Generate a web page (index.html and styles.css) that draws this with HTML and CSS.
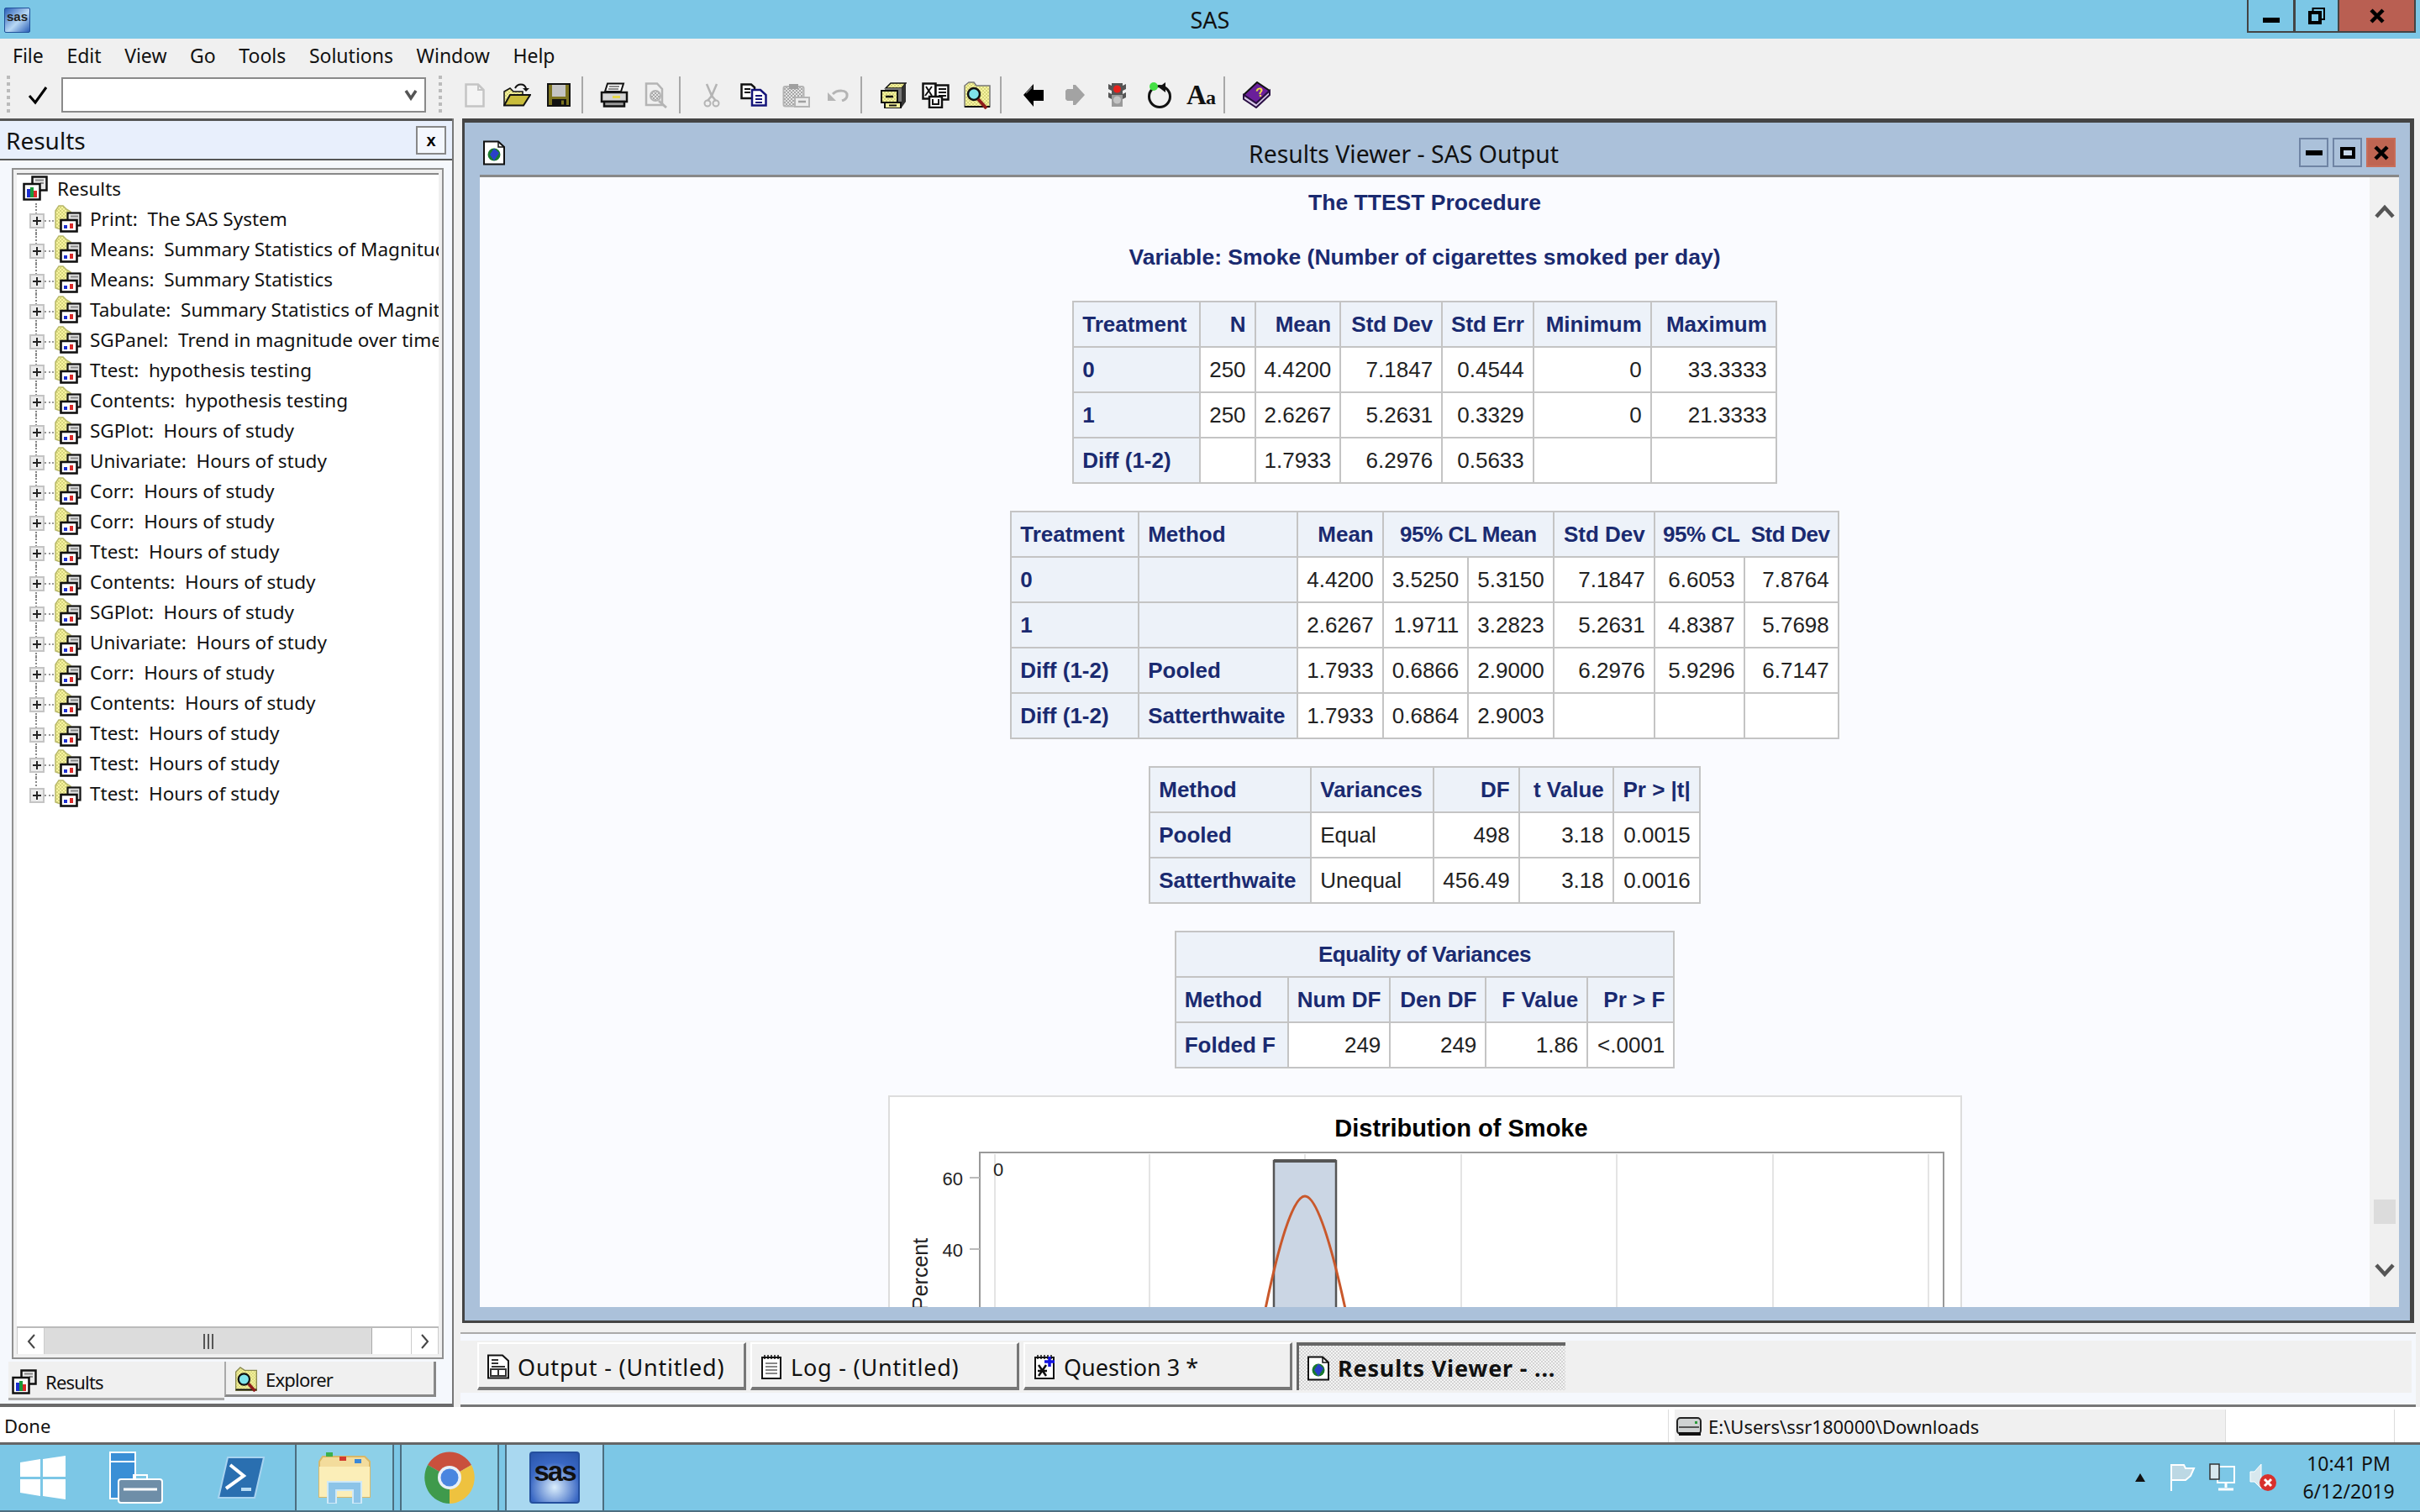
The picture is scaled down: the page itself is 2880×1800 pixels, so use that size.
FILE: index.html
```html
<!DOCTYPE html>
<html lang="en">
    <head>
        <meta charset="UTF-8" />
        <title>SAS</title>
        <link rel="stylesheet" href="styles.css">
    </head>
    <body>
        <svg class="sprite" xmlns="http://www.w3.org/2000/svg">
            <defs>
                <pattern id="dither" width="4" height="4" patternUnits="userSpaceOnUse">
                    <rect width="4" height="4" fill="#f8f4a0"/>
                    <rect width="2" height="2" fill="#d6d67c"/>
                    <rect x="2" y="2" width="2" height="2" fill="#d6d67c"/>
                </pattern>
                <pattern id="dither-gray" width="4" height="4" patternUnits="userSpaceOnUse">
                    <rect width="4" height="4" fill="#e4e4e4"/>
                    <rect width="2" height="2" fill="#a6a6a6"/>
                    <rect x="2" y="2" width="2" height="2" fill="#a6a6a6"/>
                </pattern>
                <symbol id="ic-results" viewBox="0 0 30 30">
                    <rect x="11.5" y="1.5" width="17" height="16" fill="#e8e8e8" stroke="#111" stroke-width="2.5"/>
                    <path d="M15 5.5h10M21 9h4" stroke="#888" stroke-width="2"/>
                    <rect x="1.5" y="10" width="19" height="18.5" fill="#fff" stroke="#111" stroke-width="2.5"/>
                    <rect x="5" y="16" width="4" height="10" fill="#1c2fd0"/>
                    <rect x="9" y="14" width="4" height="12" fill="#1a9a3a"/>
                    <rect x="13" y="18" width="4" height="8" fill="#d92a2a"/>
                </symbol>
                <symbol id="ic-folder-results" viewBox="0 0 32 33">
                    <path d="M1 7 L5 1 H10 L14 5 L19 8 V29 H7 L1 27 Z" fill="url(#dither)" stroke="#b8b86a" stroke-width="1.5"/>
                    <rect x="15.5" y="9.5" width="15" height="15" fill="#e4e4e4" stroke="#111" stroke-width="2.2"/>
                    <path d="M19 13.5h9" stroke="#888" stroke-width="2"/>
                    <rect x="7.5" y="18" width="19" height="13.5" fill="#fff" stroke="#111" stroke-width="2.6"/>
                    <rect x="11" y="24" width="4" height="4" fill="#1c2fd0"/>
                    <rect x="18" y="22" width="4" height="6" fill="#d92a2a"/>
                </symbol>
                <symbol id="ic-globe-doc" viewBox="0 0 30 30">
                    <path d="M3 1.5 H20 L27 8 V28.5 H3 Z" fill="#fff" stroke="#111" stroke-width="2"/>
                    <path d="M20 1.5 V8 H27" fill="none" stroke="#111" stroke-width="1.5"/>
                    <circle cx="15" cy="17" r="7.5" fill="#1a7a2e"/>
                    <path d="M15 9.5 L21 15 L15 24.5 L10 17 Z" fill="#2a3fc8"/>
                </symbol>
                <symbol id="ic-output-doc" viewBox="0 0 30 30">
                    <path d="M3 1.5 H20 L27 8 V28.5 H3 Z" fill="#fff" stroke="#111" stroke-width="2"/>
                    <path d="M7 7h8M7 11h8M7 15h16" stroke="#333" stroke-width="2"/>
                    <rect x="6" y="18" width="18" height="8" fill="#fff" stroke="#333" stroke-width="2"/>
                    <path d="M15 18v8" stroke="#333" stroke-width="2"/>
                </symbol>
                <symbol id="ic-log-doc" viewBox="0 0 30 30">
                    <rect x="4" y="4" width="22" height="25" fill="#fff" stroke="#111" stroke-width="2"/>
                    <path d="M7 1v5M11 1v5M15 1v5M19 1v5M23 1v5" stroke="#111" stroke-width="1.5"/>
                    <path d="M8 11h14M8 15h14M8 19h14M8 23h14" stroke="#888" stroke-width="2"/>
                </symbol>
                <symbol id="ic-program-doc" viewBox="0 0 30 30">
                    <rect x="4" y="4" width="22" height="25" fill="#fff" stroke="#111" stroke-width="2"/>
                    <path d="M7 1v5M11 1v5M15 1v5M19 1v5M23 1v5" stroke="#111" stroke-width="1.5"/>
                    <path d="M8 26 L17 13 M8 13 L17 26 M7 20h11" stroke="#111" stroke-width="2.5"/>
                    <path d="M21 3v12M15 9h12" stroke="#1414e0" stroke-width="3.5"/>
                </symbol>
                <symbol id="ic-explorer" viewBox="0 0 32 34">
                    <path d="M2 7 L8 1 L14 5 H30 V32 H2 Z" fill="url(#dither)" stroke="#8a8a50" stroke-width="1.5"/>
                    <path d="M2 32 H30 V30 H2 Z" fill="#111"/>
                    <circle cx="13" cy="17" r="7.5" fill="#7fe4ec" stroke="#111" stroke-width="2.5"/>
                    <path d="M19 23 L28 33" stroke="#8e1b1b" stroke-width="4"/>
                </symbol>
            </defs>
        </svg>

        <div class="screen">
            <header class="titlebar">
                <div class="app-icon">sas</div>
                <div class="app-title">SAS</div>
                <div class="win-buttons">
                    <button class="win-btn win-min"><span class="glyph-min"></span></button>
                    <button class="win-btn win-restore">
                        <svg width="20" height="20" viewBox="0 0 20 20"><path d="M5.5 4.5 V1 H19 V14 H16" fill="none" stroke="#000" stroke-width="2"/><rect x="2" y="6" width="12" height="12" fill="none" stroke="#000" stroke-width="4"/></svg>
                    </button>
                    <button class="win-btn win-close">
                        <svg width="20" height="18" viewBox="0 0 20 18"><path d="M3 2 L17 16 M17 2 L3 16" stroke="#000" stroke-width="4.5"/></svg>
                    </button>
                </div>
            </header>

            <nav class="menubar">
                <span>File</span><span>Edit</span><span>View</span><span>Go</span><span>Tools</span><span>Solutions</span><span>Window</span><span>Help</span>
            </nav>

            <div class="toolbar">
                <span class="grip"></span>
                <span class="check-btn">
                    <svg width="28" height="28" viewBox="0 0 28 28"><path d="M4 15 L11 23 L24 5" fill="none" stroke="#000" stroke-width="3"/></svg>
                </span>
                <div class="combo">
                    <svg width="16" height="14" viewBox="0 0 16 14"><path d="M2 2 L8 11 L14 2" fill="none" stroke="#555" stroke-width="3.5"/></svg>
                </div>
                <span class="grip grip-second"></span>

                <span class="tool">
                    <svg width="24" height="29" viewBox="0 0 24 29"><path d="M1.5 1.5 H16 L22.5 8 V27.5 H1.5 Z" fill="#f4f4f4" stroke="#c4c4c4" stroke-width="2.5"/><path d="M16 1.5 V8 H22.5" fill="none" stroke="#c4c4c4" stroke-width="2"/></svg>
                </span>
                <span class="tool">
                    <svg width="33" height="28" viewBox="0 0 33 28"><path d="M1 10 L8 6 L12 10 H23 V26 H1 Z" fill="url(#dither)" stroke="#111" stroke-width="1.5"/><path d="M1 26.5 L8 14 H32 L24 26.5 Z" fill="#c9bd3c" stroke="#111" stroke-width="2"/><path d="M14 6 C17 0 25 0 27 6" fill="none" stroke="#111" stroke-width="2"/><path d="M23 6 H31 L27 10 Z" fill="#111"/></svg>
                </span>
                <span class="tool">
                    <svg width="28" height="28" viewBox="0 0 28 28"><rect x="1" y="1" width="26" height="26" fill="#7d7420" stroke="#111" stroke-width="2"/><rect x="6" y="2" width="16" height="14" fill="#c4c4c4"/><rect x="6" y="19" width="17" height="8" fill="#111"/><rect x="17" y="20.5" width="3" height="5" fill="#7d7420"/></svg>
                </span>
                <span class="tool-sep"></span>
                <span class="tool">
                    <svg width="34" height="30" viewBox="0 0 34 30"><path d="M9 1.5 H28 L25 11 H6 Z" fill="#fff" stroke="#111" stroke-width="2"/><path d="M11 5h12M10 8h12" stroke="#666" stroke-width="1.5"/><path d="M2 12 H32 V23 H2 Z" fill="#d4d4d4" stroke="#111" stroke-width="2.5"/><rect x="15" y="16" width="9" height="3" fill="#e6d84a"/><path d="M5 23 H29 V28.5 H5 Z" fill="#999" stroke="#111" stroke-width="2.5"/></svg>
                </span>
                <span class="tool">
                    <svg width="28" height="31" viewBox="0 0 28 31"><path d="M2 1.5 H15 L21 8 V27 H2 Z" fill="#f0f0f0" stroke="#b4b4b4" stroke-width="2.5"/><circle cx="13" cy="16" r="6" fill="url(#dither-gray)" stroke="#b4b4b4" stroke-width="2"/><path d="M17 22 L26 30" stroke="#b4b4b4" stroke-width="3"/></svg>
                </span>
                <span class="tool-sep"></span>
                <span class="tool">
                    <svg width="20" height="29" viewBox="0 0 20 29"><path d="M4 1 L10 15 L16 1" fill="none" stroke="#b4b4b4" stroke-width="2.5"/><path d="M10 15 L5 21 M10 15 L15 21" stroke="#b4b4b4" stroke-width="2.5"/><circle cx="5" cy="24" r="3.5" fill="none" stroke="#b4b4b4" stroke-width="2"/><circle cx="15" cy="24" r="3.5" fill="none" stroke="#b4b4b4" stroke-width="2"/></svg>
                </span>
                <span class="tool">
                    <svg width="32" height="28" viewBox="0 0 32 28"><path d="M1.5 1.5 H13 L17 5 V18 H1.5 Z" fill="#fff" stroke="#111" stroke-width="2.5"/><path d="M5 7h7M5 11h7" stroke="#111" stroke-width="2"/><path d="M14 8 H24 L30.5 14 V26.5 H14 Z" fill="#fff" stroke="#14147a" stroke-width="2.5"/><path d="M18 15h8M18 19h8M18 23h8" stroke="#14147a" stroke-width="2"/></svg>
                </span>
                <span class="tool">
                    <svg width="33" height="29" viewBox="0 0 33 29"><rect x="1.5" y="4" width="24" height="23.5" rx="2" fill="url(#dither-gray)" stroke="#b4b4b4" stroke-width="2"/><rect x="8" y="1" width="11" height="6" fill="#a0a0a0"/><rect x="15" y="17" width="17" height="11" fill="#ececec" stroke="#b4b4b4" stroke-width="2"/><path d="M19 22h9" stroke="#a0a0a0" stroke-width="2.5"/></svg>
                </span>
                <span class="tool">
                    <svg width="26" height="15" viewBox="0 0 26 15"><path d="M7 6 C12 1 25 0 24 8 C24 11 21 13 18 14" fill="none" stroke="#b4b4b4" stroke-width="3"/><path d="M1 4 V14 H11 Z" fill="#b4b4b4"/></svg>
                </span>
                <span class="tool-sep"></span>
                <span class="tool">
                    <svg width="31" height="32" viewBox="0 0 31 32"><path d="M6 8 L12 2 H30 L25 8 Z" fill="url(#dither)" stroke="#111" stroke-width="1.5"/><path d="M25 8 L30 2 V24 L25 31 Z" fill="#333"/><path d="M5 8 H25 V31 H5 Z" fill="#777"/><rect x="1" y="11" width="19" height="14" fill="url(#dither)" stroke="#111" stroke-width="2"/><path d="M6 18 h9" stroke="#111" stroke-width="2.5"/><rect x="5" y="25" width="19" height="7" fill="#f8f4a0" stroke="#111" stroke-width="2"/><path d="M10 28.5h9" stroke="#111" stroke-width="2"/></svg>
                </span>
                <span class="tool">
                    <svg width="33" height="31" viewBox="0 0 33 31"><rect x="1.5" y="1.5" width="15" height="18" fill="#fff" stroke="#111" stroke-width="2.5"/><rect x="16.5" y="3.5" width="15" height="17" fill="#fff" stroke="#111" stroke-width="2.5"/><path d="M4 16 L12 5 M5 5 L12 16 M20 8h9M20 12h9M20 16h9" stroke="#111" stroke-width="2"/><rect x="9" y="17" width="15" height="13" fill="#fff" stroke="#111" stroke-width="2.5"/><path d="M13 20v6h7v-6" fill="none" stroke="#111" stroke-width="2"/></svg>
                </span>
                <span class="tool">
                    <svg width="32" height="33" viewBox="0 0 32 33"><path d="M1 5 L6 1 H12 L15 5 H31 V30 H1 Z" fill="url(#dither)" stroke="#777" stroke-width="1.5"/><path d="M1 29 H31 V31 H1 Z" fill="#111"/><circle cx="12" cy="15" r="7" fill="#7fe4ec" stroke="#111" stroke-width="2.5"/><path d="M17 21 L27 32" stroke="#8e1b1b" stroke-width="4"/></svg>
                </span>
                <span class="tool-sep"></span>
                <span class="tool">
                    <svg width="25" height="28" viewBox="0 0 25 28"><path d="M1 14 L13 1 V8 H25 V21 H13 V28 Z" fill="#000"/><path d="M4 12 L11 5" stroke="#777" stroke-width="1.5"/></svg>
                </span>
                <span class="tool">
                    <svg width="23" height="26" viewBox="0 0 23 26"><path d="M23 13 L12 1 H9 V6 H2 L0 8 V18 L2 20 H9 V25 H12 Z" fill="#a3a3a3"/></svg>
                </span>
                <span class="tool">
                    <svg width="21" height="30" viewBox="0 0 21 30"><path d="M0 2 L4 4 V1 H17 V4 L21 2 V8 L17 10 V14 L21 12 V18 L17 20 V29 H4 V20 L0 18 V12 L4 14 V10 L0 8 Z" fill="#555"/><path d="M4 15 H17 V29 H4 Z" fill="#9a9a9a"/><circle cx="10.5" cy="8" r="4.5" fill="#e8221c"/><circle cx="10.5" cy="21" r="4.5" fill="#c4c4c4"/></svg>
                </span>
                <span class="tool">
                    <svg width="31" height="31" viewBox="0 0 31 31"><circle cx="16" cy="17" r="12.5" fill="none" stroke="#111" stroke-width="3"/><path d="M23 0 V12 L15 6 Z" fill="#111"/><circle cx="9" cy="5" r="5" fill="#45e045"/></svg>
                </span>
                <span class="tool tool-font">A<small>a</small></span>
                <span class="tool-sep"></span>
                <span class="tool">
                    <svg width="33" height="32" viewBox="0 0 33 32"><path d="M1 16 L17 1 L32 11 L16 26 Z" fill="#6a1f9a" stroke="#111" stroke-width="2"/><path d="M1 16 V21 L16 31 L32 16 V11 L16 26 Z" fill="#d8c8e8" stroke="#2a0f44" stroke-width="2"/><text x="16" y="19" class="book-mark" transform="rotate(-14 16 15)">?</text></svg>
                </span>
            </div>

            <main class="workspace">
                <aside class="side-panel">
                    <div class="side-head">
                        <span class="side-title">Results</span>
                        <button class="side-close">x</button>
                    </div>
                    <div class="tree-frame">
                        <div class="tree">
                            <div class="tree-root">
                                <svg class="tree-root-icon"><use href="#ic-results"/></svg>
                                <span>Results</span>
                            </div>
                            <ul class="tree-list">
                                <li><i class="plus"></i><svg class="node-icon"><use href="#ic-folder-results"/></svg><span>Print:  The SAS System</span></li>
                                <li><i class="plus"></i><svg class="node-icon"><use href="#ic-folder-results"/></svg><span>Means:  Summary Statistics of Magnitude</span></li>
                                <li><i class="plus"></i><svg class="node-icon"><use href="#ic-folder-results"/></svg><span>Means:  Summary Statistics</span></li>
                                <li><i class="plus"></i><svg class="node-icon"><use href="#ic-folder-results"/></svg><span>Tabulate:  Summary Statistics of Magnitude</span></li>
                                <li><i class="plus"></i><svg class="node-icon"><use href="#ic-folder-results"/></svg><span>SGPanel:  Trend in magnitude over time</span></li>
                                <li><i class="plus"></i><svg class="node-icon"><use href="#ic-folder-results"/></svg><span>Ttest:  hypothesis testing</span></li>
                                <li><i class="plus"></i><svg class="node-icon"><use href="#ic-folder-results"/></svg><span>Contents:  hypothesis testing</span></li>
                                <li><i class="plus"></i><svg class="node-icon"><use href="#ic-folder-results"/></svg><span>SGPlot:  Hours of study</span></li>
                                <li><i class="plus"></i><svg class="node-icon"><use href="#ic-folder-results"/></svg><span>Univariate:  Hours of study</span></li>
                                <li><i class="plus"></i><svg class="node-icon"><use href="#ic-folder-results"/></svg><span>Corr:  Hours of study</span></li>
                                <li><i class="plus"></i><svg class="node-icon"><use href="#ic-folder-results"/></svg><span>Corr:  Hours of study</span></li>
                                <li><i class="plus"></i><svg class="node-icon"><use href="#ic-folder-results"/></svg><span>Ttest:  Hours of study</span></li>
                                <li><i class="plus"></i><svg class="node-icon"><use href="#ic-folder-results"/></svg><span>Contents:  Hours of study</span></li>
                                <li><i class="plus"></i><svg class="node-icon"><use href="#ic-folder-results"/></svg><span>SGPlot:  Hours of study</span></li>
                                <li><i class="plus"></i><svg class="node-icon"><use href="#ic-folder-results"/></svg><span>Univariate:  Hours of study</span></li>
                                <li><i class="plus"></i><svg class="node-icon"><use href="#ic-folder-results"/></svg><span>Corr:  Hours of study</span></li>
                                <li><i class="plus"></i><svg class="node-icon"><use href="#ic-folder-results"/></svg><span>Contents:  Hours of study</span></li>
                                <li><i class="plus"></i><svg class="node-icon"><use href="#ic-folder-results"/></svg><span>Ttest:  Hours of study</span></li>
                                <li><i class="plus"></i><svg class="node-icon"><use href="#ic-folder-results"/></svg><span>Ttest:  Hours of study</span></li>
                                <li><i class="plus"></i><svg class="node-icon"><use href="#ic-folder-results"/></svg><span>Ttest:  Hours of study</span></li>
                            </ul>
                            <div class="hscroll">
                                <span class="hscroll-btn">
                                    <svg width="12" height="20" viewBox="0 0 12 20"><path d="M10 2 L3 10 L10 18" fill="none" stroke="#444" stroke-width="2"/></svg>
                                </span>
                                <span class="hscroll-thumb"><i></i><i></i><i></i></span>
                                <span class="hscroll-rest"></span>
                                <span class="hscroll-btn">
                                    <svg width="12" height="20" viewBox="0 0 12 20"><path d="M2 2 L9 10 L2 18" fill="none" stroke="#444" stroke-width="2"/></svg>
                                </span>
                            </div>
                        </div>
                    </div>
                    <div class="side-tabs">
                        <div class="side-tab side-tab-active">
                            <svg class="tab-icon"><use href="#ic-results"/></svg>
                            <span>Results</span>
                        </div>
                        <div class="side-tab">
                            <svg class="tab-icon"><use href="#ic-explorer"/></svg>
                            <span>Explorer</span>
                        </div>
                    </div>
                </aside>

                <section class="mdi">
                    <div class="viewer">
                        <div class="viewer-head">
                            <svg class="viewer-icon"><use href="#ic-globe-doc"/></svg>
                            <span class="viewer-title">Results Viewer - SAS Output</span>
                            <div class="viewer-buttons">
                                <button class="mini-btn"><span class="glyph-min"></span></button>
                                <button class="mini-btn"><span class="glyph-max"></span></button>
                                <button class="mini-btn mini-close">
                                    <svg width="20" height="18" viewBox="0 0 20 18"><path d="M3 2 L17 16 M17 2 L3 16" stroke="#000" stroke-width="4.5"/></svg>
                                </button>
                            </div>
                        </div>
                        <div class="viewer-body">
                            <div class="output">
                                <h1 class="proc-title">The TTEST Procedure</h1>
                                <h2 class="proc-var">Variable: Smoke (Number of cigarettes smoked per day)</h2>

                                <table class="stat">
                                    <colgroup><col class="w151"><col class="w63"><col class="w99"><col class="w121"><col class="w105"><col class="w140"><col class="w149"></colgroup>
                                    <tr><th class="left">Treatment</th><th>N</th><th>Mean</th><th>Std Dev</th><th>Std Err</th><th>Minimum</th><th>Maximum</th></tr>
                                    <tr><th class="left">0</th><td>250</td><td>4.4200</td><td>7.1847</td><td>0.4544</td><td>0</td><td>33.3333</td></tr>
                                    <tr><th class="left">1</th><td>250</td><td>2.6267</td><td>5.2631</td><td>0.3329</td><td>0</td><td>21.3333</td></tr>
                                    <tr><th class="left">Diff (1-2)</th><td></td><td>1.7933</td><td>6.2976</td><td>0.5633</td><td></td><td></td></tr>
                                </table>

                                <table class="stat">
                                    <colgroup><col class="w152"><col class="w189"><col class="w99"><col class="w101"><col class="w100"><col class="w120"><col class="w107"><col class="w112"></colgroup>
                                    <tr><th class="left">Treatment</th><th class="left">Method</th><th>Mean</th><th colspan="2" class="mid">95% CL Mean</th><th>Std Dev</th><th colspan="2" class="mid">95% CL  Std Dev</th></tr>
                                    <tr><th class="left">0</th><th></th><td>4.4200</td><td>3.5250</td><td>5.3150</td><td>7.1847</td><td>6.6053</td><td>7.8764</td></tr>
                                    <tr><th class="left">1</th><th></th><td>2.6267</td><td>1.9711</td><td>3.2823</td><td>5.2631</td><td>4.8387</td><td>5.7698</td></tr>
                                    <tr><th class="left">Diff (1-2)</th><th class="left">Pooled</th><td>1.7933</td><td>0.6866</td><td>2.9000</td><td>6.2976</td><td>5.9296</td><td>6.7147</td></tr>
                                    <tr><th class="left">Diff (1-2)</th><th class="left">Satterthwaite</th><td>1.7933</td><td>0.6864</td><td>2.9003</td><td></td><td></td><td></td></tr>
                                </table>

                                <table class="stat">
                                    <colgroup><col class="w192"><col class="w146"><col class="w101"><col class="w112"><col class="w103"></colgroup>
                                    <tr><th class="left">Method</th><th class="left">Variances</th><th>DF</th><th>t Value</th><th>Pr &gt; |t|</th></tr>
                                    <tr><th class="left">Pooled</th><td class="left">Equal</td><td>498</td><td>3.18</td><td>0.0015</td></tr>
                                    <tr><th class="left">Satterthwaite</th><td class="left">Unequal</td><td>456.49</td><td>3.18</td><td>0.0016</td></tr>
                                </table>

                                <table class="stat">
                                    <colgroup><col class="w134"><col class="w121"><col class="w114"><col class="w121"><col class="w103"></colgroup>
                                    <tr><th colspan="5" class="mid">Equality of Variances</th></tr>
                                    <tr><th class="left">Method</th><th>Num DF</th><th>Den DF</th><th>F Value</th><th>Pr &gt; F</th></tr>
                                    <tr><th class="left">Folded F</th><td>249</td><td>249</td><td>1.86</td><td>&lt;.0001</td></tr>
                                </table>

                                <div class="chart">
                                    <svg width="1274" height="400" viewBox="0 0 1274 400">
                                        <text x="680" y="47" class="chart-title" text-anchor="middle">Distribution of Smoke</text>
                                        <g stroke="#e4e4e4" stroke-width="2">
                                            <path d="M125 68V400M309 68V400M494 68V400M680 68V400M865 68V400M1051 68V400M1236 68V400"/>
                                        </g>
                                        <rect x="107" y="66" width="1147" height="340" fill="none" stroke="#999" stroke-width="2"/>
                                        <path d="M95 96h12M95 181h12" stroke="#bbb" stroke-width="2"/>
                                        <text x="87" y="105" class="chart-num" text-anchor="end">60</text>
                                        <text x="87" y="190" class="chart-num" text-anchor="end">40</text>
                                        <text x="123" y="94" class="chart-cell">0</text>
                                        <rect x="457" y="76" width="74" height="330" fill="#cbd6e4" stroke="#555" stroke-width="2.5"/>
                                        <path d="M457 76h74" stroke="#555" stroke-width="4"/>
                                        <path d="M447 252 C466 160 482 118 494 118 C506 118 522 160 542 252" fill="none" stroke="#c9582b" stroke-width="3"/>
                                        <text transform="translate(45 254) rotate(-90)" class="chart-axis">Percent</text>
                                    </svg>
                                </div>
                            </div>
                            <div class="vscroll">
                                <svg class="vscroll-up" width="24" height="18" viewBox="0 0 24 18"><path d="M2 15 L12 4 L22 15" fill="none" stroke="#555" stroke-width="4.5"/></svg>
                                <span class="vscroll-thumb"></span>
                                <svg class="vscroll-down" width="24" height="18" viewBox="0 0 24 18"><path d="M2 3 L12 14 L22 3" fill="none" stroke="#555" stroke-width="4.5"/></svg>
                            </div>
                        </div>
                    </div>
                    <div class="window-bar">
                        <div class="window-band">
                            <div class="win-tab win-tab-wide"><svg class="tab-icon"><use href="#ic-output-doc"/></svg><span>Output - (Untitled)</span></div>
                            <div class="win-tab win-tab-wide"><svg class="tab-icon"><use href="#ic-log-doc"/></svg><span>Log - (Untitled)</span></div>
                            <div class="win-tab"><svg class="tab-icon"><use href="#ic-program-doc"/></svg><span>Question 3 *</span></div>
                            <div class="win-tab win-tab-wide win-tab-active"><svg class="tab-icon"><use href="#ic-globe-doc"/></svg><span>Results Viewer - ...</span></div>
                        </div>
                    </div>
                </section>
            </main>

            <footer class="statusbar">
                <span class="status-msg">Done</span>
                <div class="status-path">
                    <svg width="32" height="26" viewBox="0 0 32 26"><rect x="1" y="3" width="28" height="19" rx="4" fill="#cfd2d2" stroke="#222" stroke-width="2"/><path d="M3 14h24" stroke="#555" stroke-width="2"/><path d="M3 22h26" stroke="#111" stroke-width="4"/><rect x="22" y="7" width="3" height="3" fill="#2a9a3a"/></svg>
                    <span>E:\Users\ssr180000\Downloads</span>
                </div>
                <span class="status-end"></span>
            </footer>

            <div class="taskbar">
                <span class="task-slot task-start">
                    <svg width="56" height="52" viewBox="0 0 56 52"><path d="M1 8 L25 4 V25 H1 Z M28 4 L55 0 V25 H28 Z M1 28 H25 V48 L1 44 Z M28 28 H55 V52 L28 48 Z" fill="#fff"/></svg>
                </span>
                <span class="task-slot task-server">
                    <svg width="66" height="62" viewBox="0 0 66 62"><rect x="2" y="1" width="30" height="55" fill="#3a8fd6" stroke="#fff" stroke-width="2"/><path d="M2 12h30" stroke="#fff" stroke-width="2"/><rect x="12" y="33" width="52" height="28" rx="3" fill="#6e8ea8" stroke="#fff" stroke-width="2"/><path d="M30 33 V28 H46 V33" fill="none" stroke="#fff" stroke-width="2"/><path d="M18 45h40" stroke="#fff" stroke-width="3"/></svg>
                </span>
                <span class="task-slot task-shell">
                    <svg width="58" height="52" viewBox="0 0 58 52"><path d="M13 2 H56 L45 50 H2 Z" fill="#2a6fb0" stroke="#a8d4f0" stroke-width="2"/><path d="M16 11 L32 24 L11 39" fill="none" stroke="#fff" stroke-width="4"/><path d="M29 40h12" stroke="#b8dcf4" stroke-width="4"/></svg>
                </span>
                <span class="task-slot task-btn">
                    <svg width="64" height="62" viewBox="0 0 64 62"><path d="M2 12 L6 6 H56 L62 12 V54 H2 Z" fill="#f3dc9c" stroke="#d8b868" stroke-width="2"/><rect x="10" y="1" width="8" height="5" fill="#3cb04a"/><rect x="26" y="6" width="8" height="5" fill="#d23b2e"/><rect x="44" y="9" width="8" height="5" fill="#3b88d8"/><path d="M2 18 H62 V54 H2 Z" fill="#fbeeb8"/><path d="M12 36 H52 V62 H42 V46 H22 V62 H12 Z" fill="#8cc4e8" stroke="#cfe9f8" stroke-width="2"/></svg>
                </span>
                <span class="task-slot task-btn">
                    <svg width="60" height="62" viewBox="0 0 60 62"><path d="M30 31 L4 16 A30 31 0 0 1 56 16 Z" fill="#c9503d"/><path d="M30 31 L4 16 A30 31 0 0 0 30 62 Z" fill="#3f9a4c"/><path d="M30 31 L56 16 A30 31 0 0 1 30 62 Z" fill="#eec23f"/><circle cx="30" cy="31" r="14" fill="#e8f0f8"/><circle cx="30" cy="31" r="10.5" fill="#4a86e0"/></svg>
                </span>
                <span class="task-slot task-btn task-active">
                    <span class="sas-tile">sas</span>
                </span>
                <div class="tray">
                    <svg class="tray-arrow" width="14" height="12" viewBox="0 0 14 12"><path d="M7 1 L13 11 H1 Z" fill="#111"/></svg>
                    <svg width="32" height="34" viewBox="0 0 32 34"><path d="M3 1 V33" stroke="#fff" stroke-width="2"/><path d="M3 2 H18 L20 6 H30 L26 15 L20 20 H3 Z" fill="#bcd8e4" stroke="#fff" stroke-width="2"/></svg>
                    <svg width="32" height="34" viewBox="0 0 32 34"><rect x="10" y="4" width="20" height="19" fill="#7cc7e6" stroke="#fff" stroke-width="2"/><rect x="1" y="1" width="11" height="18" fill="#d8e8ee" stroke="#333" stroke-width="1.5"/><path d="M20 23v6M11 31h18" stroke="#fff" stroke-width="3"/></svg>
                    <svg width="32" height="38" viewBox="0 0 32 38"><path d="M1 12 H6 L14 3 V32 L6 24 H1 Z" fill="#d8e8ee" stroke="#fff" stroke-width="1"/><circle cx="22" cy="25" r="10" fill="#d8302c"/><path d="M18 21 L26 29 M26 21 L18 29" stroke="#fff" stroke-width="3"/></svg>
                    <div class="clock"><span>10:41 PM</span><span>6/12/2019</span></div>
                </div>
            </div>
        </div>
    </body>
</html>
```

FILE: styles.css
```css
html, body {
    margin: 0;
    padding: 0;
}

body {
    font-family: "Noto Sans", sans-serif;
    color: #111;
    background-color: #f0f0f0;
}

.sprite {
    position: absolute;
    width: 0;
    height: 0;
}

.screen {
    width: 2880px;
    height: 1800px;
    overflow: hidden;
    display: flex;
    flex-direction: column;
}

/* title bar */
.titlebar {
    height: 46px;
    flex: none;
    display: grid;
    grid-template-columns: 1fr auto 1fr;
    align-items: start;
    background-color: #7cc7e6;
}

.app-icon {
    width: 29px;
    height: 28px;
    margin: 9px 0 0 5px;
    background: linear-gradient(135deg, #2a5fb8, #b8d8f4 55%, #2a5fb8);
    border: 1px solid #20509a;
    border-radius: 2px;
    font: bold 15px/20px "Liberation Sans", sans-serif;
    color: #222;
    text-align: center;
}

.app-title {
    font-size: 27px;
    line-height: 48px;
}

.win-buttons {
    justify-self: end;
    display: flex;
    margin-right: 5px;
}

.win-btn {
    height: 39px;
    padding: 0;
    border: 1px solid #444;
    border-top: none;
    background-color: #7cc7e6;
    display: flex;
    align-items: center;
    justify-content: center;
}

.win-min {
    width: 56px;
    border-width: 0 1px 2px 2px;
    align-items: flex-end;
    padding-bottom: 10px;
}

.win-restore {
    width: 52px;
    border-width: 0 0 2px 2px;
}

.win-close {
    width: 93px;
    background-color: #b95f52;
    border-width: 0 2px 2px 2px;
}

.glyph-min {
    display: block;
    width: 20px;
    height: 6px;
    background-color: #000;
}

.glyph-max {
    display: block;
    width: 10px;
    height: 6px;
    border: 4px solid #000;
    background-color: #c8d8ea;
}

/* menu */
.menubar {
    height: 42px;
    flex: none;
    box-sizing: border-box;
    display: flex;
    align-items: center;
    gap: 27.6px;
    padding: 0 0 3px 15px;
    font-size: 23px;
}

/* toolbar */
.toolbar {
    height: 53px;
    flex: none;
    display: flex;
    align-items: center;
    padding-bottom: 3px;
    box-sizing: border-box;
}

.grip {
    width: 4px;
    height: 46px;
    margin-left: 8px;
    background: repeating-linear-gradient(to bottom, #bbb 0 4px, transparent 4px 8px);
}

.check-btn {
    width: 61px;
    box-sizing: border-box;
    padding-left: 5px;
    display: flex;
    justify-content: center;
}

.combo {
    width: 434px;
    height: 42px;
    box-sizing: border-box;
    border: 2px solid #8a8a8a;
    background-color: #fff;
    display: flex;
    align-items: center;
    justify-content: flex-end;
    padding-right: 8px;
}

.grip-second {
    margin-left: 15px;
    margin-right: 14px;
}

.tool {
    width: 50px;
    height: 44px;
    display: flex;
    align-items: center;
    justify-content: center;
}

.tool-font {
    font: bold 33px/44px "Liberation Serif", serif;
    color: #111;
    align-items: baseline;
    letter-spacing: -1px;
}

.tool-font small {
    font-size: 24px;
}

.book-mark {
    font: bold 15px "Liberation Sans", sans-serif;
    fill: #f0e040;
}

.tool-sep {
    width: 2px;
    height: 44px;
    margin: 0 12px 0 2px;
    background-color: #a8a8a8;
}

/* workspace */
.workspace {
    flex: 1;
    min-height: 0;
    display: flex;
}

.side-panel {
    width: 540px;
    flex: none;
    box-sizing: border-box;
    display: flex;
    flex-direction: column;
    background-color: #f5f8fd;
    border-right: 2px solid #777;
    border-bottom: 4px solid #6a6a6a;
}

.side-head {
    height: 50px;
    flex: none;
    box-sizing: border-box;
    display: flex;
    align-items: center;
    justify-content: space-between;
    padding: 0 7px;
    background-color: #e8effc;
    border-top: 3px solid #555;
    border-bottom: 2px solid #555;
}

.side-title {
    font-size: 28px;
}

.side-close {
    width: 36px;
    height: 34px;
    padding: 0;
    border: 2px solid #888;
    background-color: #f4f7fe;
    font: bold 20px/26px "Liberation Sans", sans-serif;
}

.tree-frame {
    flex: 1;
    min-height: 0;
    margin: 9px 10px 0 14px;
    box-sizing: border-box;
    border: 2px solid #909090;
    padding: 4px;
    background-color: #f0f0f0;
}

.tree {
    height: 100%;
    box-sizing: border-box;
    display: flex;
    flex-direction: column;
    overflow: hidden;
    background-color: #fff;
    border-top: 2px solid #888;
}

.tree-root {
    height: 34px;
    flex: none;
    box-sizing: border-box;
    padding: 0 0 2px 7px;
    display: flex;
    align-items: center;
    gap: 11px;
    font-size: 22.5px;
}

.tree-root-icon {
    width: 30px;
    height: 30px;
}

.tree-list {
    flex: 1;
    min-height: 0;
    margin: 0;
    padding: 0;
    list-style: none;
    overflow: hidden;
}

.tree-list li {
    height: 36px;
    position: relative;
    display: flex;
    align-items: center;
    padding-left: 15px;
    white-space: pre;
    font-size: 22.5px;
}

.tree-list li::before {
    content: "";
    position: absolute;
    left: 22px;
    top: 0;
    height: 100%;
    border-left: 2px dotted #888;
}

.tree-list li:last-child::before {
    height: 50%;
}

.plus {
    width: 18px;
    height: 18px;
    margin-top: 5px;
    position: relative;
    z-index: 1;
    flex: none;
    box-sizing: border-box;
    border: 2px solid #c4c4c4;
    background:
        linear-gradient(#222, #222) center / 10px 2px no-repeat,
        linear-gradient(#222, #222) center / 2px 10px no-repeat,
        #ececec;
}

.plus::after {
    content: "";
    position: absolute;
    left: 16px;
    top: 6px;
    width: 11px;
    border-top: 2px dotted #999;
}

.node-icon {
    width: 32px;
    height: 33px;
    flex: none;
    margin: 0 10px 0 12px;
}

.hscroll {
    height: 33px;
    flex: none;
    display: flex;
    background-color: #fff;
    border-top: 2px solid #bbb;
    box-sizing: border-box;
}

.hscroll-btn {
    width: 33px;
    display: flex;
    align-items: center;
    justify-content: center;
    border-right: 1px solid #ccc;
    border-left: 1px solid #ccc;
    box-sizing: border-box;
}

.hscroll-thumb {
    width: 390px;
    background-color: #dcdcdc;
    border-right: 1px solid #aaa;
    box-sizing: border-box;
    display: flex;
    align-items: center;
    justify-content: center;
    gap: 3px;
}

.hscroll-thumb i {
    width: 2px;
    height: 18px;
    background-color: #555;
}

.hscroll-rest {
    flex: 1;
}

.side-tabs {
    height: 53px;
    flex: none;
    box-sizing: border-box;
    display: flex;
    padding: 3px 0 0 10px;
}

.side-tab {
    width: 252px;
    height: 42px;
    box-sizing: border-box;
    display: flex;
    align-items: center;
    gap: 8px;
    padding: 3px 0 0 9px;
    font-size: 22px;
    background-color: #f0f0f0;
    border-left: 2px solid #aaa;
    border-right: 3px solid #888;
    border-bottom: 3px solid #888;
    letter-spacing: -0.8px;
}

.side-tab-active {
    width: 257px;
    height: 46px;
    padding: 5px 0 0 4px;
    gap: 10px;
    border-left: none;
    border-right: none;
    border-bottom: 3px solid #aaa;
}

.tab-icon {
    width: 30px;
    height: 30px;
    flex: none;
}

/* results viewer window */
.mdi {
    flex: 1;
    min-width: 0;
    display: flex;
    flex-direction: column;
    margin-left: 8px;
}

.viewer {
    flex: 1;
    min-height: 0;
    margin: 0 7px 11px 2px;
    box-sizing: border-box;
    display: flex;
    flex-direction: column;
    background-color: #abc1da;
    border: 4px solid #444;
    border-width: 5px 5px 3px 3px;
}

.viewer-head {
    height: 65px;
    flex: none;
    box-sizing: border-box;
    display: grid;
    grid-template-columns: 1fr auto 1fr;
    align-items: center;
    padding: 9px 4px 0 2px;
    border-bottom: 3px solid #888;
    margin: 0 13px 0 18px;
}

.viewer-icon {
    width: 30px;
    height: 30px;
}

.viewer-title {
    font-size: 28.4px;
    padding: 2px 83px 0 0;
}

.viewer-buttons {
    justify-self: end;
    display: flex;
    gap: 5px;
}

.mini-btn {
    width: 35px;
    height: 35px;
    padding: 0;
    border: 2px solid #6f84a4;
    background-color: #abc1da;
    display: flex;
    align-items: center;
    justify-content: center;
}

.mini-close {
    background-color: #bf6552;
    border-color: #c86d58;
}

.viewer-body {
    flex: 1;
    min-height: 0;
    display: flex;
    margin: 0 13px 16px 18px;
}

.output {
    flex: 1;
    min-width: 0;
    overflow: hidden;
    background-color: #fafbff;
    display: flex;
    flex-direction: column;
    align-items: center;
    font-family: "Liberation Sans", Arial, sans-serif;
}

.proc-title,
.proc-var {
    margin: 0;
    font-size: 26.5px;
    line-height: 30px;
    color: #1a2a70;
    font-weight: bold;
}

.proc-title {
    margin-top: 15px;
    margin-bottom: 35px;
}

.proc-var {
    margin-bottom: 37px;
}

.stat {
    flex: none;
    border-collapse: collapse;
    margin-bottom: 32px;
    font-size: 26px;
    white-space: pre;
    background-color: #fff;
}

.stat th,
.stat td {
    height: 54px;
    box-sizing: border-box;
    padding: 0 10px;
    border: 2px solid #c4c4c4;
    text-align: right;
}

.stat th {
    background-color: #edf2f9;
    color: #1a2a70;
}

.stat td {
    color: #222;
}

.stat .left {
    text-align: left;
}

.stat .mid {
    padding: 0;
    text-align: center;
    letter-spacing: -0.4px;
}

/* column widths of the output tables */
.w63 { width: 63px; }
.w99 { width: 99px; }
.w100 { width: 100px; }
.w101 { width: 101px; }
.w103 { width: 103px; }
.w105 { width: 105px; }
.w107 { width: 107px; }
.w112 { width: 112px; }
.w114 { width: 114px; }
.w120 { width: 120px; }
.w121 { width: 121px; }
.w134 { width: 134px; }
.w140 { width: 140px; }
.w146 { width: 146px; }
.w149 { width: 149px; }
.w151 { width: 151px; }
.w152 { width: 152px; }
.w189 { width: 189px; }
.w192 { width: 192px; }

.chart {
    flex: none;
    width: 1278px;
    box-sizing: border-box;
    background-color: #fff;
    border: 2px solid #ddd;
}

.chart svg {
    display: block;
}

.chart-title {
    font: bold 29px "Liberation Sans", sans-serif;
    fill: #000;
}

.chart-num {
    font: 22px "Liberation Sans", sans-serif;
    fill: #222;
}

.chart-cell {
    font: 22px "Liberation Sans", sans-serif;
    fill: #222;
}

.chart-axis {
    font: 25px "Liberation Sans", sans-serif;
    fill: #222;
}

.vscroll {
    width: 35px;
    flex: none;
    display: flex;
    flex-direction: column;
    align-items: center;
    background-color: #f0f0f0;
}

.vscroll-up {
    margin-top: 32px;
}

.vscroll-thumb {
    width: 26px;
    height: 29px;
    margin-top: auto;
    margin-bottom: 46px;
    background-color: #dcdcdc;
}

.vscroll-down {
    margin-bottom: 35px;
}

/* window list */
.window-bar {
    height: 89px;
    flex: none;
    box-sizing: border-box;
    margin-right: 5px;
    padding: 8px 0 17px;
    background-color: #f5f8fd;
    border-top: 2px solid #aaa;
    border-bottom: 3px solid #777;
}

.window-band {
    height: 62px;
    box-sizing: border-box;
    margin-right: 5px;
    padding: 2px 0 3px 20px;
    display: flex;
    gap: 5px;
    background-color: #f0f0f0;
}

.win-tab {
    width: 320px;
    box-sizing: border-box;
    display: flex;
    align-items: center;
    gap: 8px;
    padding: 3px 0 0 8px;
    font-size: 27px;
    white-space: nowrap;
    border-right: 3px solid #777;
    border-bottom: 4px solid #777;
    border-top: 2px solid #fff;
    border-left: 2px solid #fff;
}

.win-tab-wide {
    letter-spacing: 0.8px;
}

.win-tab-active {
    font-weight: bold;
    padding-top: 0;
    border: none;
    border-top: 4px solid #666;
    border-left: 3px solid #666;
    background: repeating-conic-gradient(#d4d4d4 0 25%, #f4f4f4 0 50%) 0 0 / 4px 4px;
}

/* status bar */
.statusbar {
    height: 45px;
    flex: none;
    box-sizing: border-box;
    display: flex;
    align-items: stretch;
    background-color: #fff;
    border-bottom: 3px solid #666;
    padding-top: 3px;
    font-size: 22px;
}

.status-msg {
    width: 1986px;
    flex: none;
    box-sizing: border-box;
    padding-left: 5px;
    border-right: 1px solid #ddd;
    line-height: 38px;
}

.status-path {
    width: 656px;
    margin-left: 7px;
    box-sizing: border-box;
    display: flex;
    align-items: center;
    gap: 6px;
    padding-left: 2px;
    background-color: #f0f0f0;
    border-right: 1px solid #ddd;
}

.status-end {
    width: 200px;
    border-right: 1px solid #ddd;
}

/* taskbar */
.taskbar {
    height: 80px;
    flex: none;
    box-sizing: border-box;
    display: flex;
    background-color: #7cc7e6;
    border-bottom: 2px solid #4c6e80;
}

.task-slot {
    width: 118px;
    flex: none;
    display: flex;
    align-items: center;
    justify-content: center;
    box-sizing: border-box;
}

.task-start {
    width: 102px;
}

.task-server {
    width: 120px;
}

.task-shell {
    width: 129px;
}

.task-btn {
    margin-right: 7px;
    background-color: #8dd0e8;
    border: 2px solid #4c6e80;
    border-width: 0 2px;
}

.task-active {
    background-color: #a9d8f0;
}

.sas-tile {
    width: 60px;
    height: 62px;
    box-sizing: border-box;
    background: radial-gradient(circle at 50% 70%, #dbeefc, #3a68c4 60%, #2a56ac);
    border: 2px solid #244f9e;
    border-radius: 4px;
    font: bold 33px/44px "Liberation Sans", sans-serif;
    letter-spacing: -2px;
    color: #111;
    text-align: center;
}

.tray {
    margin-left: auto;
    display: flex;
    align-items: center;
    gap: 16px;
    padding-right: 25px;
}

.tray-arrow {
    margin-right: 11px;
}

.clock {
    width: 120px;
    margin-left: 10px;
    display: flex;
    flex-direction: column;
    align-items: center;
    font-size: 23px;
    line-height: 33px;
}
```
